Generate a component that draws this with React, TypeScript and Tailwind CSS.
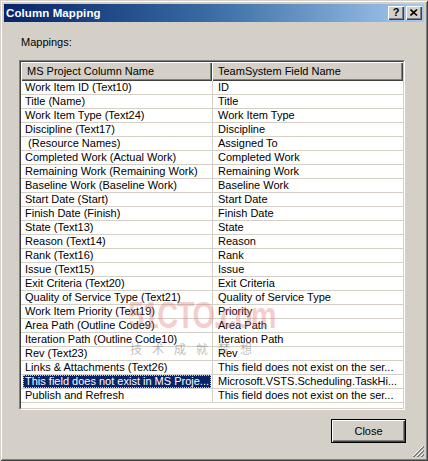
const rows: [string, string][] = [
  ['Work Item ID (Text10)', 'ID'],
  ['Title (Name)', 'Title'],
  ['Work Item Type (Text24)', 'Work Item Type'],
  ['Discipline (Text17)', 'Discipline'],
  [' (Resource Names)', 'Assigned To'],
  ['Completed Work (Actual Work)', 'Completed Work'],
  ['Remaining Work (Remaining Work)', 'Remaining Work'],
  ['Baseline Work (Baseline Work)', 'Baseline Work'],
  ['Start Date (Start)', 'Start Date'],
  ['Finish Date (Finish)', 'Finish Date'],
  ['State (Text13)', 'State'],
  ['Reason (Text14)', 'Reason'],
  ['Rank (Text16)', 'Rank'],
  ['Issue (Text15)', 'Issue'],
  ['Exit Criteria (Text20)', 'Exit Criteria'],
  ['Quality of Service Type (Text21)', 'Quality of Service Type'],
  ['Work Item Priority (Text19)', 'Priority'],
  ['Area Path (Outline Code9)', 'Area Path'],
  ['Iteration Path (Outline Code10)', 'Iteration Path'],
  ['Rev (Text23)', 'Rev'],
  ['Links & Attachments (Text26)', 'This field does not exist on the ser...'],
  ['This field does not exist in MS Proje...', 'Microsoft.VSTS.Scheduling.TaskHi...'],
  ['Publish and Refresh', 'This field does not exist on the ser...'],
];

const SELECTED = 21;

const raised =
  'bg-[#d4d0c8] shadow-[inset_1px_1px_0_#ffffff,inset_-1px_-1px_0_#404040,inset_-2px_-2px_0_#808080]';

function CaptionButton({ children }: { children: React.ReactNode }) {
  return (
    <div className={`flex h-[14px] w-[16px] items-center justify-center ${raised}`}>{children}</div>
  );
}

export default function App() {
  return (
    <div
      className="relative flex h-[461px] w-[428px] flex-col overflow-hidden bg-[#d4d0c8] p-[4px] text-[11px] leading-[13px] text-black shadow-[inset_1px_1px_0_#d4d0c8,inset_-1px_-1px_0_#404040,inset_2px_2px_0_#ffffff,inset_-2px_-2px_0_#808080]"
      style={{ fontFamily: '"Liberation Sans", Arial, sans-serif' }}
    >
      {/* title bar */}
      <div className="flex h-[18px] shrink-0 items-center justify-between bg-linear-to-r from-[#0a246a] via-[#3a6ea5] to-[#a6caf0] pl-[2px] pr-[2px]">
        <span className="text-[11.5px] font-bold tracking-[0.1px] text-white">Column Mapping</span>
        <div className="flex">
          <CaptionButton>
            <span className="-mt-px text-[11px] font-bold leading-none">?</span>
          </CaptionButton>
          <div className="w-[2px]" />
          <CaptionButton>
            <svg width="8" height="7" viewBox="0 0 8 7" className="-mt-px -ml-px">
              <path d="M0.5 0.5 L7 6.5 M7 0.5 L0.5 6.5" stroke="#000" strokeWidth="1.6" />
            </svg>
          </CaptionButton>
        </div>
      </div>

      <div className="flex flex-1 flex-col pl-[15px]">
        <div className="mt-[14px] pl-[2px]">Mappings:</div>

        {/* list view */}
        <div className="mt-[11px] h-[350px] w-[386px] border border-b-white border-l-[#808080] border-r-white border-t-[#808080]">
          <div className="flex h-full flex-col border border-b-[#d4d0c8] border-l-[#404040] border-r-[#d4d0c8] border-t-[#404040] bg-white">
            <div className="flex h-[19px] shrink-0">
              <div className={`flex w-[191px] items-center pl-[6px] ${raised}`}>MS Project Column Name</div>
              <div className={`flex flex-1 items-center pl-[6px] ${raised}`}>TeamSystem Field Name</div>
            </div>
            {rows.map(([a, b], i) => (
              <div key={i} className="flex h-[14px] shrink-0">
                <div className="flex w-[192px] items-start overflow-hidden whitespace-pre border-b border-r border-[#d4d0c8]">
                  {i === SELECTED ? (
                    <span className="ml-[2px] h-[13px] w-[188px] bg-[#0a246a] pl-[2px] text-white outline-1 -outline-offset-1 outline-dotted outline-[#d8d0a0]">
                      {a}
                    </span>
                  ) : (
                    <span className="pl-[4px]">{a}</span>
                  )}
                </div>
                <div className="flex-1 overflow-hidden whitespace-nowrap border-b border-[#d4d0c8] pl-[5px]">{b}</div>
              </div>
            ))}
          </div>
        </div>

        <div className="mt-[9px] flex w-[387px] justify-end">
          <button className="h-[24px] w-[75px] border border-black bg-[#d4d0c8] text-[11px] shadow-[inset_1px_1px_0_#ffffff,inset_-1px_-1px_0_#404040,inset_-2px_-2px_0_#808080]">
            Close
          </button>
        </div>
      </div>

      {/* resize grip */}
      <svg className="absolute bottom-[4px] right-[4px]" width="12" height="12" viewBox="0 0 12 12">
        <path d="M11 1 L1 11 M11 5 L5 11 M11 9 L9 11" stroke="#ffffff" strokeWidth="1" />
        <path d="M12 1 L1 12 M12 2 L2 12 M12 5 L5 12 M12 6 L6 12 M12 9 L9 12 M12 10 L10 12" stroke="#808080" strokeWidth="1" />
      </svg>

      {/* watermark */}
      <div className="pointer-events-none absolute left-[128px] top-[300px] flex flex-col items-start">
        <span className="origin-left scale-y-[1.25] text-[29px] font-bold leading-[30px] tracking-[-1.5px] text-[#e07070]/35">
          51CTO.com
        </span>
        <span
          className="ml-[2px] mt-[12px] text-[12px] leading-[13px] tracking-[10px] text-[#505050]/40"
          style={{ fontFamily: '"Noto Sans CJK SC", sans-serif' }}
        >
          技术成就梦想
        </span>
      </div>
    </div>
  );
}
